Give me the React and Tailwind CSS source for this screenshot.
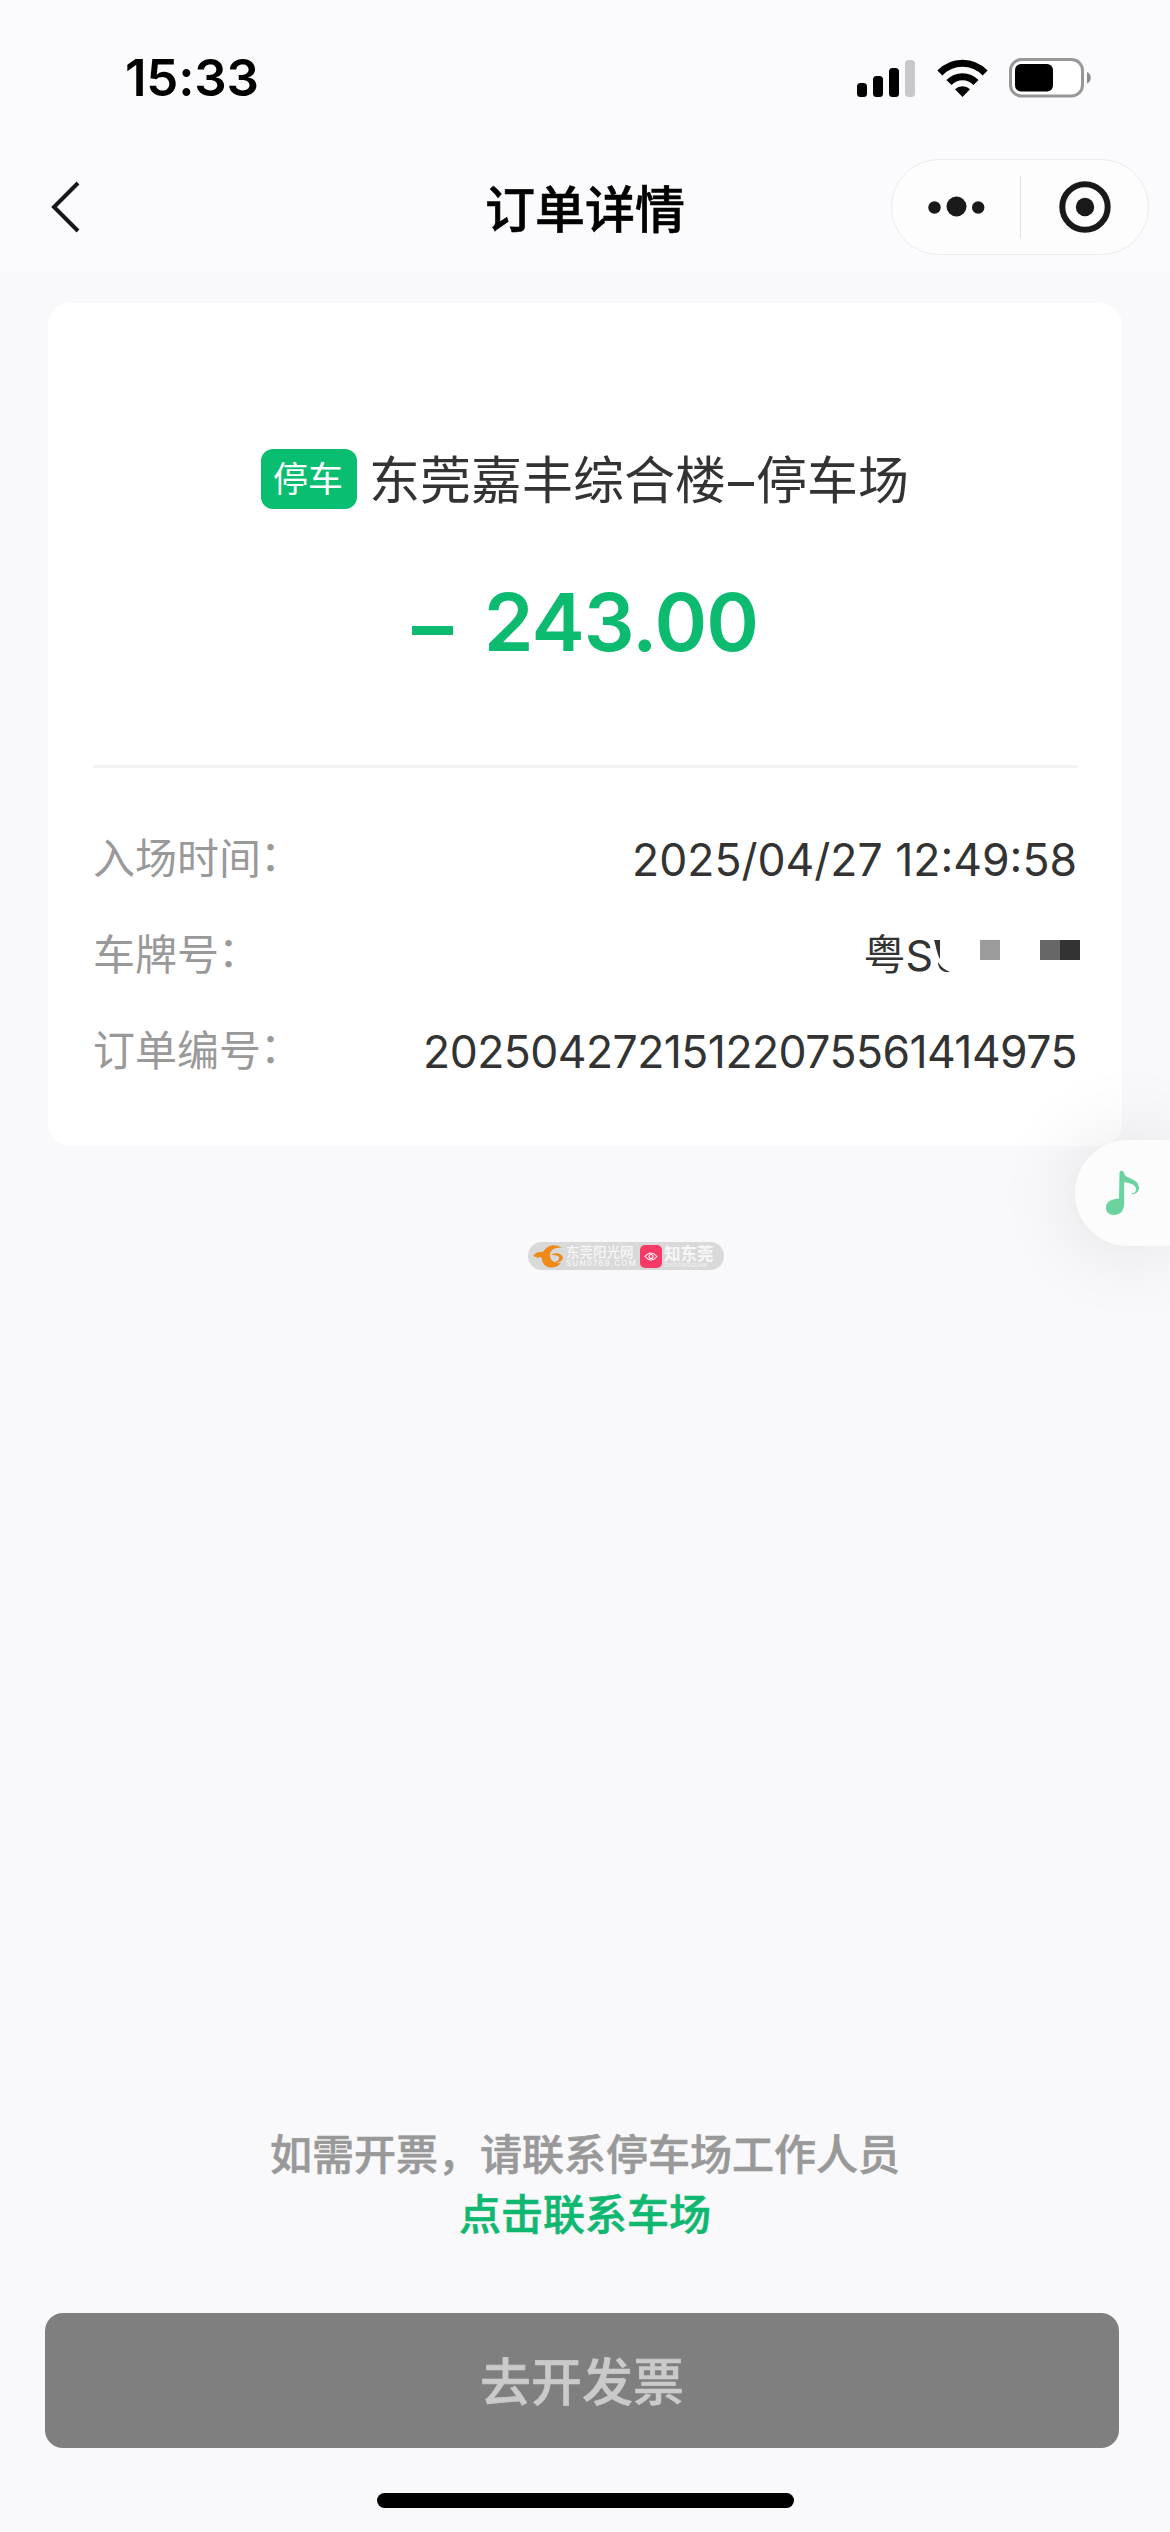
const details = [
  { label: '入场时间', value: '2025/04/27 12:49:58', spacing: 'tracking-normal' },
  { label: '车牌号', plate: true },
  { label: '订单编号', value: '20250427215122075561414975', spacing: 'tracking-[-0.55px]' },
]

function StatusBar() {
  return (
    <div className="flex h-[156px] items-start justify-between pt-[46px] pr-[78px] pl-[125px]">
      <span className="text-[51px] leading-[64px] font-semibold tracking-[-0.2px] text-black">15:33</span>
      <div className="flex items-center pt-[12px]">
        {/* Signal */}
        <svg width="58" height="38" viewBox="0 0 58 38">
          <rect x="0" y="24" width="10" height="14" rx="3.5" />
          <rect x="16" y="17" width="10" height="21" rx="3.5" />
          <rect x="32" y="9" width="10" height="29" rx="3.5" />
          <rect x="48" y="1" width="10" height="37" rx="3.5" fill="#c8c8ca" />
        </svg>
        {/* Wifi */}
        <svg className="ml-[22px]" width="51" height="38" viewBox="0 0 51 38">
          <path d="M2.900 14a31 31 0 0 1 45.200 0" fill="none" stroke="#000" strokeWidth="7" />
          <path d="M12 23.500a18.500 18.500 0 0 1 27 0" fill="none" stroke="#000" strokeWidth="7" />
          <path d="M25.500 38 18 30.200a11 11 0 0 1 15 0Z" />
        </svg>
        {/* Battery */}
        <svg className="ml-[21px]" width="83" height="40" viewBox="0 0 83 40">
          <rect x="1.500" y="1.500" width="72" height="36.500" rx="11" fill="#fff" stroke="#979799" strokeWidth="3" />
          <rect x="6" y="6" width="38" height="27.500" rx="6" />
          <path d="M78 14c5 2 5 9.500 0 11.500Z" fill="#8a8a8c" />
        </svg>
      </div>
    </div>
  )
}

function NavBar() {
  return (
    <div className="grid h-[116px] grid-cols-[1fr_auto_1fr] items-start">
      <svg className="mt-[25px] ml-[50px]" width="30" height="52" viewBox="0 0 30 52" fill="none" stroke="#17181a" strokeWidth="4">
        <path d="M28 2 4 26l24 24" />
      </svg>
      <h1 className="mt-[18px] text-[50px] leading-[72px] font-medium text-black [-webkit-text-stroke:0.6px]">订单详情</h1>
      <div className="mt-[3px] mr-[21px] flex h-[96px] w-[258px] items-center justify-self-end rounded-full border border-[#ebebed] bg-[#fdfdfe]">
        <svg className="mx-[35px]" width="58" height="22" viewBox="0 0 58 22" fill="#19191a">
          <circle cx="7.500" cy="11.500" r="6.200" />
          <circle cx="29.500" cy="10.500" r="10" />
          <circle cx="51.200" cy="11.500" r="6.200" />
        </svg>
        <div className="h-[62px] w-px bg-[#dedee0]" />
        <svg className="ml-[37px]" width="54" height="54" viewBox="0 0 54 54">
          <circle cx="27" cy="27" r="22.700" fill="none" stroke="#19191a" strokeWidth="6" />
          <circle cx="27" cy="27" r="9.200" fill="#19191a" />
        </svg>
      </div>
    </div>
  )
}

// Plate number, the tail is masked
function Plate() {
  return (
    <div className="-mr-[3px] flex h-[60px] items-center text-[#333]">
      <span className="flex items-center pt-[2px] leading-[60px]">
        <span className="text-[42px]">粤</span>
        <span className="text-[43px]">S</span>
      </span>
      <svg width="147" height="60" viewBox="0 0 147 60">
        <path d="M1 16h6v19C4 30 3 22 1 16Z" fill="#333" />
        <path d="M5 38c3 5 7 8 12 10-7 1-12-3-12-10Z" fill="#333" />
        <rect x="47" y="16" width="20" height="20" fill="#9b9b9b" />
        <rect x="107" y="16" width="20" height="20" fill="#676767" />
        <rect x="127" y="16" width="20" height="20" fill="#333" />
      </svg>
    </div>
  )
}

function OrderCard() {
  return (
    <section className="mx-[48px] mt-[31px] h-[843px] rounded-[22px] bg-white px-[45px] pt-[146px]">
      <div className="flex h-[60px] items-center justify-center">
        <span className="flex h-[60px] w-[96px] items-center justify-center rounded-[12px] bg-[#09be70] pr-[2px] text-[35px] leading-none text-white">停车</span>
        <h2 className="ml-[12px] flex pt-[4px] text-[51px] leading-[72px] text-[#333]">
          东莞嘉丰综合楼
          <span className="flex w-[30px] items-center justify-center">
            <span className="mt-[5px] h-[4px] w-[26px] bg-[#333]" />
          </span>
          停车场
        </h2>
      </div>

      <div className="mt-[63px] flex h-[100px] items-center justify-center text-[80px] font-semibold text-[#0dbb70]">
        <span className="mt-[16px] mr-[31px] h-[9px] w-[41px] bg-[#0dbb70]" />
        <span className="tracking-[-0.9px]">243.00</span>
      </div>

      <div className="mt-[93px] h-[3px] bg-[#f3f3f4]" />

      <div className="mt-[42px]">
        {details.map((row) => (
          <div key={row.label} className="flex h-[96px] items-center justify-between">
            <span className="flex pt-[2px] text-[42px] leading-[60px] text-[#999]">
              {row.label}
              <span className="-mt-[3px] -ml-px">：</span>
            </span>
            {row.plate ? (
              <Plate />
            ) : (
              <span className={`pt-[3px] text-[44.500px] leading-[60px] text-[#333] ${row.spacing}`}>{row.value}</span>
            )}
          </div>
        ))}
      </div>
    </section>
  )
}

function Sponsors() {
  return (
    <div className="mt-[96px] ml-[528px] flex h-[28px] w-[196px] items-center rounded-full bg-[#d9d9da] pl-[5px] text-[#f7f7f7]">
      <svg width="31" height="25" viewBox="0 0 31 25">
        <path d="M0 12C4 7 7 8 10 8C14 1 22-1 29 4C22 3 17 6 17 11C17 16 21 20 28 19C22 26 11 25 9 16C9 13 7 12 5 14C4 13 2 13 0 12Z" fill="#ee8a18" />
        <path d="M18 11C22 8 29 9 30 14C29 18 24 20 19 18C24 18 27 16 26 13C24 11 21 11 18 11Z" fill="#ee8a18" />
      </svg>
      <div className="ml-[2px] flex w-[69px] flex-col">
        <span className="text-[13.500px] leading-[14px] font-medium whitespace-nowrap">东莞阳光网</span>
        <span className="text-[8px] leading-[8px] font-medium tracking-[1.200px] whitespace-nowrap">SUN0769.COM</span>
      </div>
      <svg className="ml-[5px]" width="22" height="23" viewBox="0 0 22 23" fill="none">
        <rect width="22" height="23" rx="5" fill="#f73a68" />
        <path d="M5 11.500q6-7 12 0q-6 7-12 0Z" stroke="#fff" strokeWidth="1.100" />
        <circle cx="11" cy="11.500" r="2" stroke="#fff" strokeWidth="1.100" />
      </svg>
      <div className="ml-[2px] flex flex-col">
        <span className="text-[16.500px] leading-[18px] font-bold">知东莞</span>
        <span className="text-[5px] leading-[5px] tracking-[0.500px] whitespace-nowrap">ZHIDONGGUAN</span>
      </div>
    </div>
  )
}

function MusicButton() {
  return (
    <button className="absolute top-[1140px] right-0 flex h-[106px] w-[95px] items-center rounded-l-full bg-[#fcfcfd] pl-[30px] shadow-[0_0_84px_rgba(0,0,0,0.12)]">
      <svg className="-mt-px" width="35" height="46" viewBox="0 0 35 46" fill="#6ad3a0">
        <path d="M14.500 3C14.500 0 18.500 0 19 3C21 10 32 7 34 17C34.500 22 30 25 25.500 24C31 23 32 20 30.500 17C28 13 22 13 19.200 12V33C19.200 40 16 45 9 45C4 45 1 42 1 38C1 31 7 29 14 28.500Z" />
      </svg>
    </button>
  )
}

export default function App() {
  return (
    <div className="relative flex h-[2532px] w-[1170px] flex-col overflow-hidden bg-[#f9f9fb] font-['Inter','Noto_Sans_CJK_SC',sans-serif]">
      <header className="bg-[#fbfbfd]">
        <StatusBar />
        <NavBar />
      </header>

      <OrderCard />
      <Sponsors />
      <MusicButton />

      <footer className="mt-auto flex flex-col items-center">
        <p className="text-[42px] leading-[60px] font-medium text-[#999] [-webkit-text-stroke:0.6px]">如需开票，请联系停车场工作人员</p>
        <a className="text-[42px] leading-[60px] font-medium text-[#0fb870] [-webkit-text-stroke:0.6px]">点击联系车场</a>
        <button className="mt-[68px] mr-[6px] h-[135px] w-[1074px] rounded-[18px] bg-[#7f7f7f] pt-[5px] text-[51px] font-medium text-[#cacaca] [-webkit-text-stroke:0.6px]">
          去开发票
        </button>
        <div className="mt-[45px] mb-[24px] h-[15px] w-[417px] rounded-full bg-black" />
      </footer>
    </div>
  )
}
